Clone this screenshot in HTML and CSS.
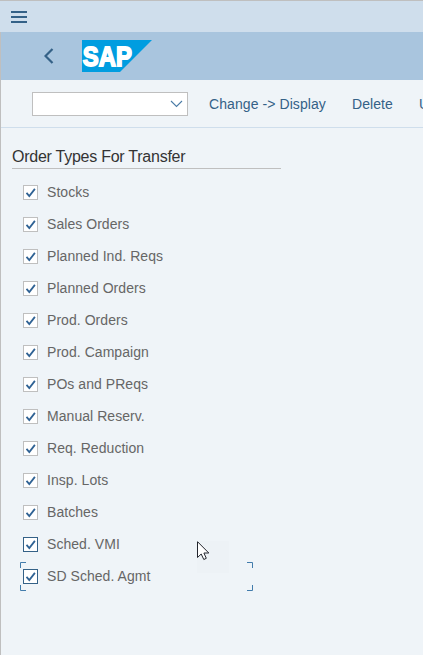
FILE: index.html
```html
<!DOCTYPE html>
<html lang="en">
<head>
  <meta charset="UTF-8" />
  <meta name="viewport" content="width=device-width, initial-scale=1.0"/>
  <title>Order Types For Transfer</title>
  <link rel="stylesheet" href="styles.css">
</head>
<body>

  <!-- Check mark used by every checkbox -->
  <svg class="defs" width="0" height="0">
    <symbol id="check" viewBox="0 0 13 13">
      <path d="M2.5 6.8 L5.3 10 L10.9 2.9" fill="none" stroke="#2f6294" stroke-width="1.8"/>
    </symbol>
  </svg>

  <div class="menu-bar">
    <svg width="16" height="12" viewBox="0 0 16 12">
      <path d="M0 1h16M0 6h16M0 11h16" stroke="#346187" stroke-width="2"/>
    </svg>
  </div>

  <div class="window">
    <header>
      <svg class="back" width="10" height="16" viewBox="0 0 10 16">
        <path d="M8.5 1 L1.5 8 L8.5 15" fill="none" stroke="#346187" stroke-width="2.2"/>
      </svg>
      <svg class="logo" width="70" height="32" viewBox="0 0 70 32">
        <path d="M0 0H70L38 32H0Z" fill="#009de0"/>
        <text x="0.8" y="26" textLength="49" lengthAdjust="spacingAndGlyphs">SAP</text>
      </svg>
    </header>

    <div class="toolbar">
      <div class="combo">
        <svg width="13" height="8" viewBox="0 0 13 8">
          <path d="M1 1 L6.500 6.500 L12 1" fill="none" stroke="#4a7ba6" stroke-width="1.1"/>
        </svg>
      </div>
      <span class="action change">Change -&gt; Display</span>
      <span class="action delete">Delete</span>
      <span class="action">Undo</span>
    </div>

    <main>
      <h1>Order Types For Transfer</h1>
      <div class="options">
        <div class="option"><svg class="box"><use href="#check"/></svg><span>Stocks</span></div>
        <div class="option"><svg class="box"><use href="#check"/></svg><span>Sales Orders</span></div>
        <div class="option"><svg class="box"><use href="#check"/></svg><span>Planned Ind. Reqs</span></div>
        <div class="option"><svg class="box"><use href="#check"/></svg><span>Planned Orders</span></div>
        <div class="option"><svg class="box"><use href="#check"/></svg><span>Prod. Orders</span></div>
        <div class="option"><svg class="box"><use href="#check"/></svg><span>Prod. Campaign</span></div>
        <div class="option"><svg class="box"><use href="#check"/></svg><span>POs and PReqs</span></div>
        <div class="option"><svg class="box"><use href="#check"/></svg><span>Manual Reserv.</span></div>
        <div class="option"><svg class="box"><use href="#check"/></svg><span>Req. Reduction</span></div>
        <div class="option"><svg class="box"><use href="#check"/></svg><span>Insp. Lots</span></div>
        <div class="option"><svg class="box"><use href="#check"/></svg><span>Batches</span></div>
        <div class="option active"><svg class="box"><use href="#check"/></svg><span>Sched. VMI</span></div>
        <div class="option active">
          <svg class="box"><use href="#check"/></svg><span>SD Sched. Agmt</span>
          <svg class="focus" width="233" height="29" viewBox="0 0 233 29">
            <path d="M.5 6V.5H6M227 .5H232.500V6M.5 23V28.500H6M227 28.500H232.500V23" fill="none" stroke="#427cac"/>
          </svg>
        </div>
      </div>
    </main>
  </div>

  <!-- Mouse pointer -->
  <svg class="pointer" width="32" height="32" viewBox="0 0 32 32">
    <rect width="32" height="32" fill="#edf2f6"/>
    <path d="M.5 .7V16.500L4.200 13L6.800 18.500L9.300 17.300L6.900 12H11.800Z" fill="#fff" stroke="#22252d"/>
  </svg>

</body>
</html>
```

FILE: styles.css
```css
* {
  box-sizing: border-box;
}

body {
  margin: 0;
  height: 100vh;
  display: flex;
  flex-direction: column;
  overflow: hidden;
  position: relative;
  background: #eff4f8;
  color: #666;
  font-family: "Liberation Sans", Arial, sans-serif;
  font-size: 14px;
}

svg {
  display: block;
  flex: none;
}

.defs {
  position: absolute;
}

.menu-bar {
  height: 32px;
  flex: none;
  padding: 10px 0 0 11px;
  border-top: 1px solid #bfbfbf;
  background: #cfdeec;
}

.window {
  flex: 1;
  border-left: 1px solid #bfbfbf;
}

header {
  height: 48px;
  display: flex;
  align-items: center;
  padding-left: 43px;
  background: #a9c5de;
}

.logo {
  margin-left: 28px;
}

.logo text {
  font-size: 28px;
  font-weight: bold;
  fill: #fff;
  stroke: #fff;
  stroke-width: 1.8px;
}

.toolbar {
  height: 48px;
  display: flex;
  align-items: center;
  padding-left: 31px;
  border-bottom: 1px solid #cfdeec;
  overflow: hidden;
}

.combo {
  width: 156px;
  height: 24px;
  flex: none;
  display: flex;
  align-items: center;
  justify-content: flex-end;
  padding-right: 4px;
  margin-right: 21px;
  border: 1px solid #bfbfbf;
  background: #fff;
}

.action {
  flex: none;
  color: #346187;
  letter-spacing: 0.08px;
  white-space: nowrap;
}

.change {
  width: 143px;
}

.delete {
  width: 67px;
}

main {
  padding: 17px 0 0 11px;
}

h1 {
  width: 269px;
  height: 24px;
  margin: 0;
  border-bottom: 1px solid #bfbfbf;
  color: #333;
  font-size: 16px;
  font-weight: normal;
  letter-spacing: -0.25px;
  line-height: 23px;
}

.options {
  padding: 7px 0 0 11px;
}

.option {
  height: 32px;
  display: flex;
  align-items: center;
  position: relative;
  letter-spacing: 0.05px;
}

.box {
  width: 15px;
  height: 15px;
  margin-right: 9px;
  border: 1px solid #bfbfbf;
  background: #fff;
}

.active .box {
  border-color: #346187;
}

.focus {
  position: absolute;
  left: -3px;
  top: 2px;
}

.pointer {
  position: absolute;
  left: 197px;
  top: 541px;
}
```
